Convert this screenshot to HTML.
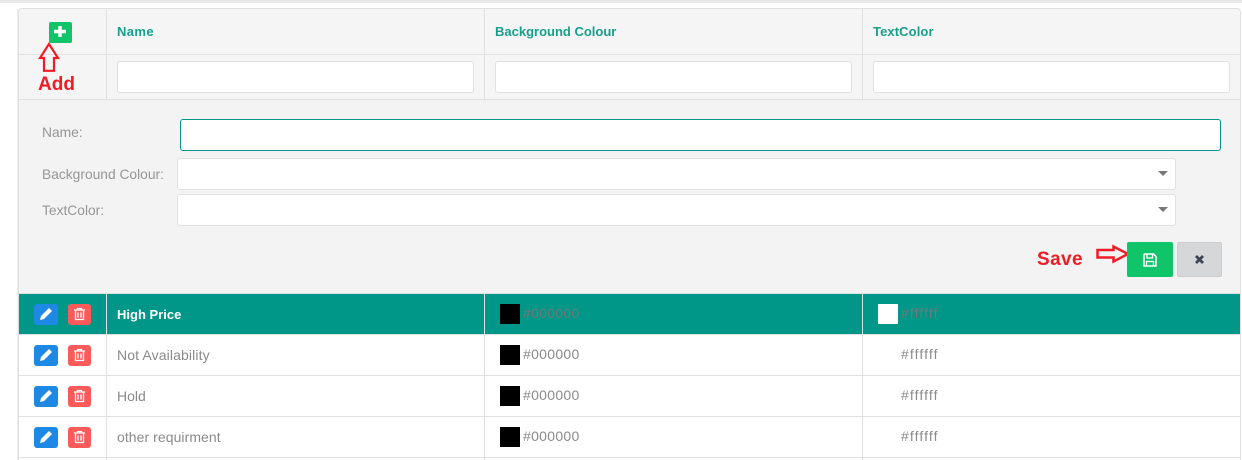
<!DOCTYPE html>
<html>
<head>
<meta charset="utf-8">
<style>
html,body{margin:0;padding:0;background:#fff;width:1242px;height:460px;overflow:hidden;font-family:"Liberation Sans",sans-serif;font-size:14px;color:#8a8a8a}
.a{position:absolute;box-sizing:border-box}
.line{position:absolute;background:#e0e0e0}
.inp{position:absolute;box-sizing:border-box;background:#fff;border:1px solid #e0e0e0;border-radius:3px}
.t{position:absolute;white-space:nowrap;line-height:16px}
.h{color:#16a08c;font-weight:bold;font-size:13px}
.lb{color:#969696;font-size:13.8px}
.hex0{letter-spacing:.3px}
.hexf{letter-spacing:1.1px}
.sw{position:absolute;width:20px;height:20px}
.caret{position:absolute;width:0;height:0;border-left:5.5px solid transparent;border-right:5.5px solid transparent;border-top:5.5px solid #777}
.red{color:#ee1c25;font-weight:bold;font-size:19px;line-height:20px;position:absolute;white-space:nowrap}
.be{position:absolute;left:34px;width:24px;height:21px;background:#1e88e5;border-radius:3px}
.bd{position:absolute;left:68px;width:23px;height:21px;background:#ff5a5a;border-radius:3px}
svg{position:absolute;display:block}
</style>
</head>
<body>
<div class="a" style="left:0;top:0;width:1242px;height:3px;background:#e8e8e8"></div>
<div class="a" style="left:17px;top:9px;width:1px;height:451px;background:#efefef"></div>
<div class="a" style="left:18px;top:8px;width:1223px;height:452px;background:#f3f3f3;border:1px solid #e0e0e0;border-bottom:0;border-radius:4px 4px 0 0"></div>
<div class="a" style="left:19px;top:9px;width:1221px;height:90px;background:#f5f5f5;border-radius:3px 3px 0 0"></div>

<!-- header lines -->
<div class="line" style="left:19px;top:54px;width:1221px;height:1px"></div>
<div class="line" style="left:19px;top:99px;width:1221px;height:1px"></div>
<div class="line" style="left:106px;top:9px;width:1px;height:90px"></div>
<div class="line" style="left:484px;top:9px;width:1px;height:90px"></div>
<div class="line" style="left:862px;top:9px;width:1px;height:90px"></div>

<div class="t h" style="left:117px;top:24px;letter-spacing:.4px">Name</div>
<div class="t h" style="left:495px;top:24px">Background Colour</div>
<div class="t h" style="left:873px;top:24px;letter-spacing:.1px">TextColor</div>

<div class="inp" style="left:117px;top:61px;width:357px;height:32px"></div>
<div class="inp" style="left:495px;top:61px;width:357px;height:32px"></div>
<div class="inp" style="left:873px;top:61px;width:357px;height:32px"></div>

<!-- add button -->
<div class="a" style="left:49px;top:22px;width:23px;height:21px;background:#10c469;border-radius:2px"></div>
<svg style="left:49px;top:22px" width="23" height="21" viewBox="0 0 23 21"><path d="M9.300 4h3.400v3.800H17v3.400h-4.300V15H9.300v-3.800H5V7.800h4.300z" fill="#fff"/></svg>
<svg style="left:38px;top:42px" width="22" height="32" viewBox="0 0 22 32"><path d="M11 2 L20 16 H16 V28.800 H6 V16 H2 Z" fill="none" stroke="#ee1c25" stroke-width="2.200"/></svg>
<div class="red" style="left:38px;top:75px">Add</div>

<!-- form -->
<div class="t lb" style="left:42px;top:125px">Name:</div>
<div class="t lb" style="left:42px;top:167px">Background Colour:</div>
<div class="t lb" style="left:42px;top:203px">TextColor:</div>
<div class="inp" style="left:180px;top:119px;width:1041px;height:32px;border-color:#009688"></div>
<div class="inp" style="left:177px;top:158px;width:999px;height:32px"></div>
<div class="inp" style="left:177px;top:194px;width:999px;height:32px"></div>
<div class="caret" style="left:1158px;top:171px"></div>
<div class="caret" style="left:1158px;top:207px"></div>

<div class="red" style="left:1037px;top:250px;letter-spacing:.4px">Save</div>
<svg style="left:1095px;top:244px" width="38" height="20" viewBox="0 0 38 20"><path d="M2.500 6 H18.500 V2.500 L33 10 L18.500 17.500 V13.500 H2.500 Z" fill="none" stroke="#ee1c25" stroke-width="2.500"/></svg>
<div class="a" style="left:1127px;top:242px;width:46px;height:35px;background:#10c469;border-radius:2px"></div>
<svg style="left:1143px;top:253px" width="14" height="14" viewBox="0 0 14 14"><path d="M1.500 1 H10.500 L13 3.500 V13 H1 V1.500 Z" fill="none" stroke="#fff" stroke-width="1.500"/><path d="M4 1.500 V5 H9.500 V1.500 M3.500 13 V8.500 H10.500 V13" fill="none" stroke="#fff" stroke-width="1.300"/></svg>
<div class="a" style="left:1177px;top:242px;width:45px;height:35px;background:#d6d7d9;border:1px solid #cdcdcd;border-radius:2px"></div>
<svg style="left:1194px;top:254px" width="11" height="11" viewBox="0 0 11 11"><path d="M2 2 L9 9 M9 2 L2 9" stroke="#3f4450" stroke-width="2.800" fill="none"/></svg>

<!-- rows -->
<div class="a" style="left:19px;top:293px;width:1221px;height:1px;background:#e0e0e0"></div>
<div class="a" style="left:19px;top:294px;width:1221px;height:40px;background:#009688"></div>
<div class="a" style="left:19px;top:335px;width:1221px;height:125px;background:#fff"></div>
<div class="line" style="left:19px;top:334px;width:1221px;height:1px"></div>
<div class="line" style="left:19px;top:375px;width:1221px;height:1px"></div>
<div class="line" style="left:19px;top:416px;width:1221px;height:1px"></div>
<div class="line" style="left:19px;top:457px;width:1221px;height:1px"></div>
<div class="line" style="left:106px;top:294px;width:1px;height:166px"></div>
<div class="line" style="left:484px;top:294px;width:1px;height:166px"></div>
<div class="line" style="left:862px;top:294px;width:1px;height:166px"></div>

<!-- row 1 -->
<div class="be" style="top:304px"></div><div class="bd" style="top:304px"></div>
<svg style="left:39px;top:307px" width="14" height="14" viewBox="0 0 14 14"><path d="M10 1 L13 4 L5 12 L1 13 L2 9 Z" fill="#fff"/></svg>
<svg style="left:73px;top:307px" width="13" height="14" viewBox="0 0 13 14"><path d="M1 3 H12 M4.500 3 V1.500 H8.500 V3 M2.500 3 V12.500 H10.500 V3 M5 5.500 V10.500 M8 5.500 V10.500" fill="none" stroke="#fff" stroke-width="1.300"/></svg>
<div class="t" style="left:117px;top:307px;color:#fff;font-weight:bold;font-size:13px">High Price</div>
<div class="sw" style="left:500px;top:304px;background:#000"></div>
<div class="t hex0" style="left:523px;top:305px;color:#6f7a78">#000000</div>
<div class="sw" style="left:878px;top:304px;background:#fff"></div>
<div class="t hexf" style="left:901px;top:305px;color:#6f7a78">#ffffff</div>

<!-- row 2 -->
<div class="be" style="top:345px"></div><div class="bd" style="top:345px"></div>
<svg style="left:39px;top:348px" width="14" height="14" viewBox="0 0 14 14"><path d="M10 1 L13 4 L5 12 L1 13 L2 9 Z" fill="#fff"/></svg>
<svg style="left:73px;top:348px" width="13" height="14" viewBox="0 0 13 14"><path d="M1 3 H12 M4.500 3 V1.500 H8.500 V3 M2.500 3 V12.500 H10.500 V3 M5 5.500 V10.500 M8 5.500 V10.500" fill="none" stroke="#fff" stroke-width="1.300"/></svg>
<div class="t" style="left:117px;top:347px;font-size:14px;letter-spacing:.12px">Not Availability</div>
<div class="sw" style="left:500px;top:345px;background:#000"></div>
<div class="t hex0" style="left:523px;top:346px">#000000</div>
<div class="t hexf" style="left:901px;top:346px">#ffffff</div>

<!-- row 3 -->
<div class="be" style="top:386px"></div><div class="bd" style="top:386px"></div>
<svg style="left:39px;top:389px" width="14" height="14" viewBox="0 0 14 14"><path d="M10 1 L13 4 L5 12 L1 13 L2 9 Z" fill="#fff"/></svg>
<svg style="left:73px;top:389px" width="13" height="14" viewBox="0 0 13 14"><path d="M1 3 H12 M4.500 3 V1.500 H8.500 V3 M2.500 3 V12.500 H10.500 V3 M5 5.500 V10.500 M8 5.500 V10.500" fill="none" stroke="#fff" stroke-width="1.300"/></svg>
<div class="t" style="left:117px;top:388px;font-size:14px">Hold</div>
<div class="sw" style="left:500px;top:386px;background:#000"></div>
<div class="t hex0" style="left:523px;top:387px">#000000</div>
<div class="t hexf" style="left:901px;top:387px">#ffffff</div>

<!-- row 4 -->
<div class="be" style="top:427px"></div><div class="bd" style="top:427px"></div>
<svg style="left:39px;top:430px" width="14" height="14" viewBox="0 0 14 14"><path d="M10 1 L13 4 L5 12 L1 13 L2 9 Z" fill="#fff"/></svg>
<svg style="left:73px;top:430px" width="13" height="14" viewBox="0 0 13 14"><path d="M1 3 H12 M4.500 3 V1.500 H8.500 V3 M2.500 3 V12.500 H10.500 V3 M5 5.500 V10.500 M8 5.500 V10.500" fill="none" stroke="#fff" stroke-width="1.300"/></svg>
<div class="t" style="left:117px;top:429px;font-size:14px;letter-spacing:.06px">other requirment</div>
<div class="sw" style="left:500px;top:427px;background:#000"></div>
<div class="t hex0" style="left:523px;top:428px">#000000</div>
<div class="t hexf" style="left:901px;top:428px">#ffffff</div>
</body>
</html>
